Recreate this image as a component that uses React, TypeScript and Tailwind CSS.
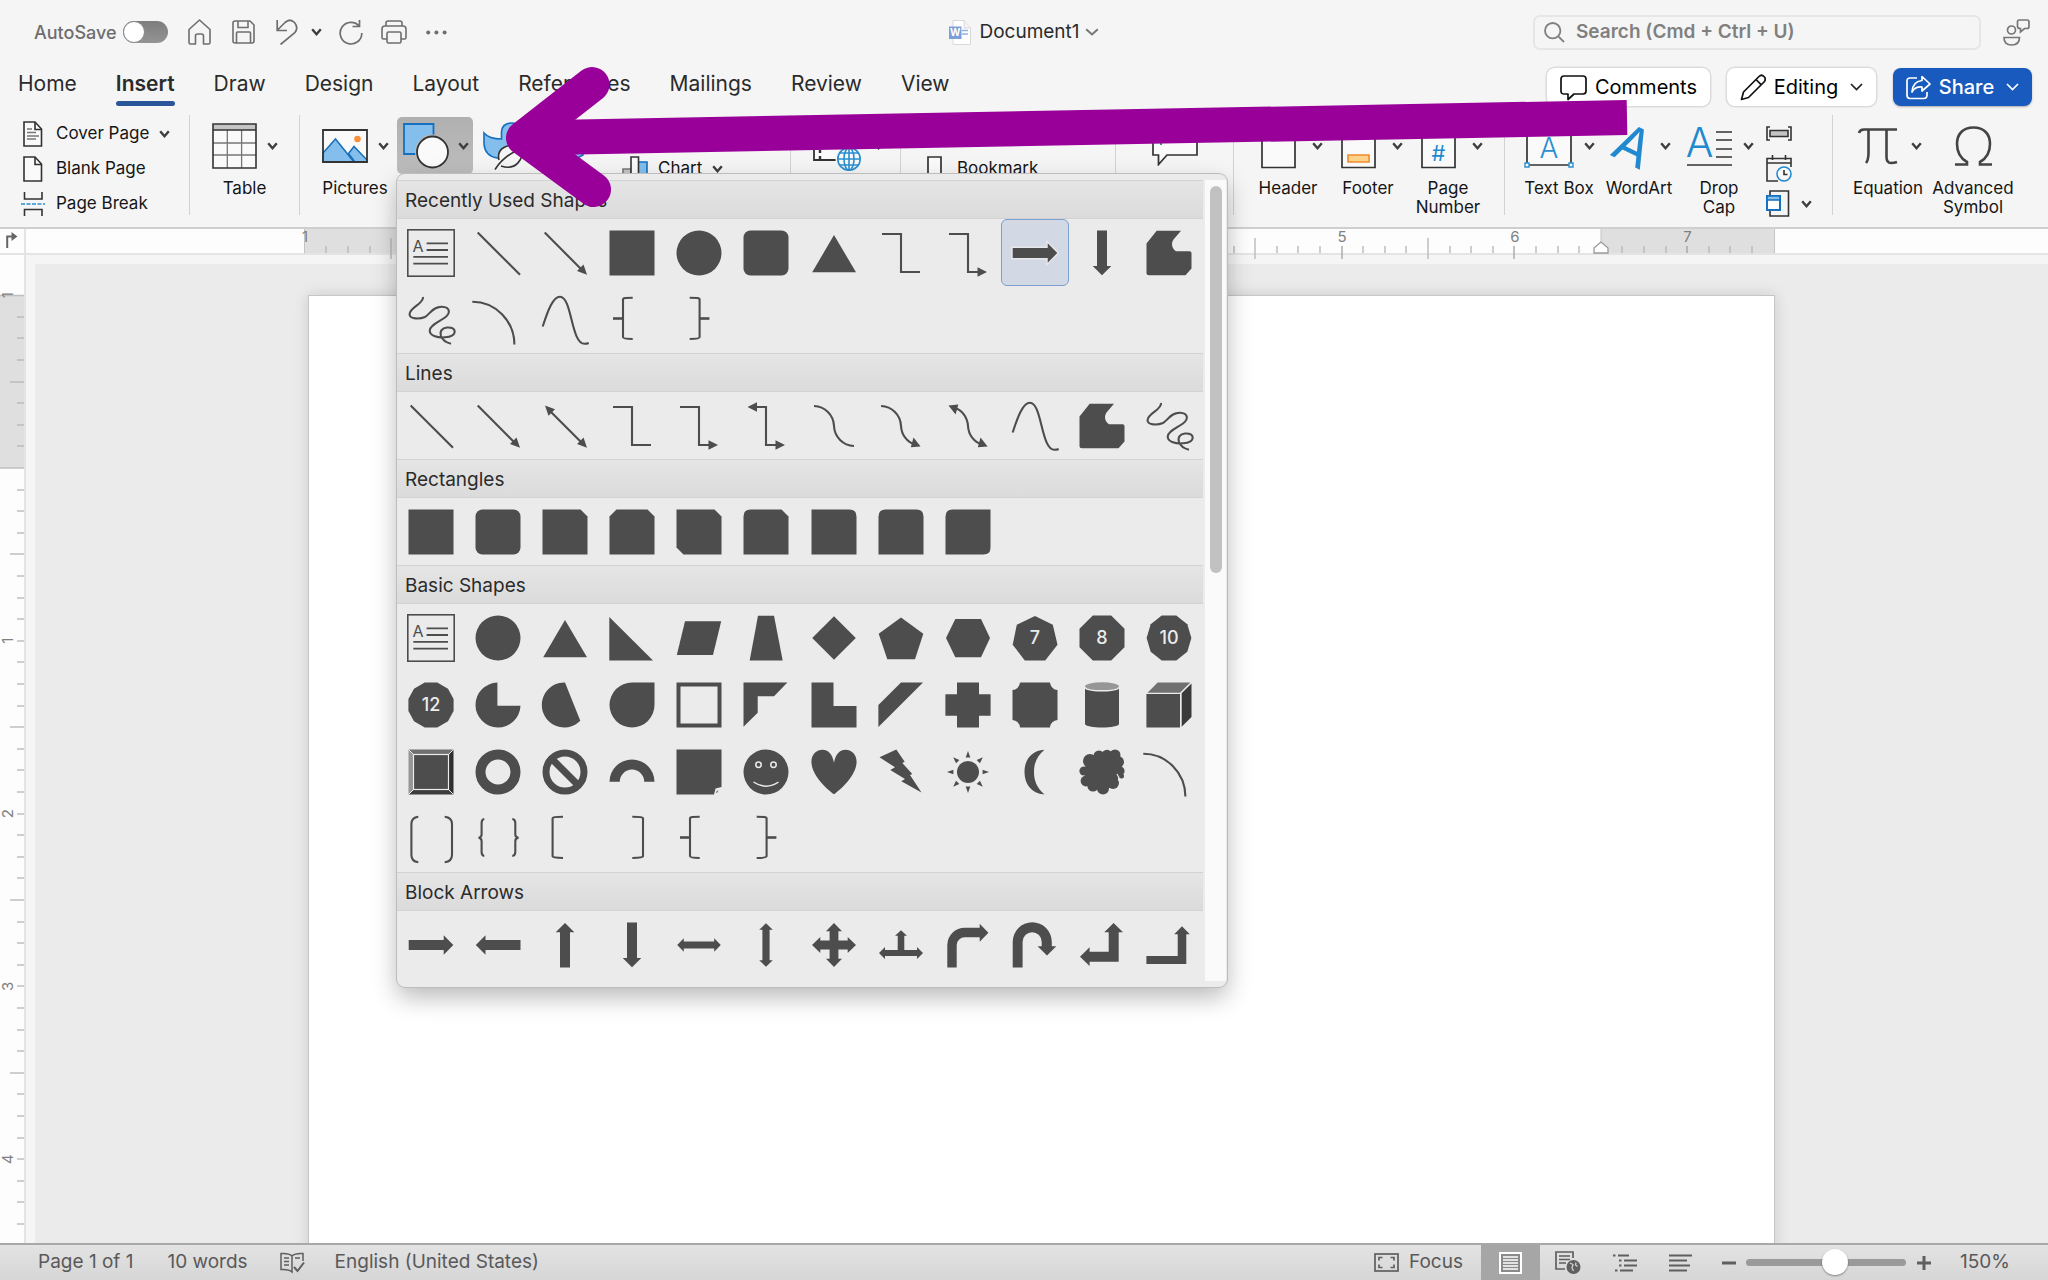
import React, { useState } from 'react';

const INK = '#4d4d4d';

/* ---------- shape gallery ---------- */

const rightHead = (x: number, y: number) => <path d={`M${x} ${y}l-9.5-4.7v9.4z`} fill={INK} />;
const leftHead = (x: number, y: number) => <path d={`M${x} ${y}l9.5-4.7v9.4z`} fill={INK} />;

const stroke = (d: string, w = 2.1) => <path d={d} fill="none" stroke={INK} strokeWidth={w} />;
const fill = (d: string) => <path d={d} fill={INK} />;
const digits = (d: string, label: string) => (
  <>
    {fill(d)}
    <text x="24" y="30.3" textAnchor="middle" fontSize="18" fontWeight="500" fill="#ececec" fontFamily="Inter, sans-serif">{label}</text>
  </>
);

const scribble = stroke(
  'M16 1C17 8 2.5 11 2.5 18.5C3 23 12 23.5 18 21C23 18 26 10.5 35 10.7C43 11 44 17 38 21.5C32 26 23 29 22.7 34.7C23 40 31 42 38 41.3C44 41 47.7 39 47.7 35.5C47.5 32 44 31.3 40 31.5C35 32 32.5 35 34 40C35.5 44.5 39 46.5 44 47.7'
);
const rightArrow = 'M1.7 19H36.7V14.3L46.3 24L36.7 33.7V29H1.7Z';
const downArrow = 'M19 1.5H29V37H33.3L24 46.3L14.7 37H19Z';

const SHAPES: Record<string, React.ReactNode> = {
  'Text Box': (
    <>
      <rect x="0.8" y="0.8" width="46.4" height="46.4" fill="none" stroke={INK} strokeWidth="1.6" />
      <text x="5.5" y="23" fontSize="16" fill={INK} fontFamily="Inter, sans-serif">A</text>
      {stroke('M19.6 14.4H41M19.6 21H41M6.3 27.8H41M6.3 34.7H41', 1.8)}
    </>
  ),
  Line: stroke('M3.7 3.5L46 45.8'),
  'Line Arrow': (
    <>
      {stroke('M3.7 3.5L40 40')}
      {fill('M46 45.8L42.5 35.5L36 42Z')}
    </>
  ),
  'Line Double Arrow': (
    <>
      {stroke('M8 8L40 40')}
      {fill('M46 45.8L42.5 35.5L36 42ZM4 3.5L7.5 13.8L14 7.3Z')}
    </>
  ),
  Rectangle: fill('M1.5 1.5H46.5V46.5H1.5Z'),
  Oval: <circle cx="24" cy="24" r="22.5" fill={INK} />,
  'Rounded Rectangle': <rect x="1.5" y="1.5" width="45" height="45" rx="7" fill={INK} />,
  Triangle: fill('M24 6L46 43.3H2.2Z'),
  'Elbow Connector': stroke('M5 5H24V43H43'),
  'Elbow Arrow Connector': (
    <>
      {stroke('M5 5H24V43H36')}
      {rightHead(43, 43)}
    </>
  ),
  'Elbow Double-Arrow Connector': (
    <>
      {stroke('M12 5H24V43H36')}
      {rightHead(43, 43)}
      {leftHead(5.5, 5)}
    </>
  ),
  'Right Arrow': fill(rightArrow),
  'Down Arrow': fill(downArrow),
  Freeform: fill('M11.7 1.7H36L28.5 10.5C25.5 15 27.5 20 31 22.3H44.5Q46.5 22.3 46.5 24V39.5L40.5 46.3H4Q1.5 46.3 1.5 43.8V14.5Z'),
  Scribble: scribble,
  Arc: stroke('M-1.7 5.7A42 43 0 0 1 40.4 48.5'),
  Curve: stroke('M1.7 30.5C7 14 12 0.7 19 0.7C31 0.7 30 47.8 43.5 47.8Q46 47.8 47.7 47'),
  'Left Brace': (
    <>
      {stroke('M24.7 1.7Q15 1.7 15 3.2V41.3Q15 42.8 24.7 43')}
      {stroke('M5 22.5H15', 2.6)}
    </>
  ),
  'Right Brace': (
    <>
      {stroke('M14.7 1.7Q24.6 1.7 24.6 3.2V41.3Q24.6 42.8 14.7 43')}
      {stroke('M24.6 22.5H34.4', 2.6)}
    </>
  ),
  'Curved Connector': stroke('M4 4C15 4.5 23.5 13 24 24C24.5 35 33 43.5 44 44'),
  'Curved Arrow Connector': (
    <>
      {stroke('M4 4C15 4.5 23.5 13 24 24C24.5 33 30 40 38 42.5')}
      {fill('M43.6 44.5L36.5 35.5L33.8 45.3Z')}
    </>
  ),
  'Curved Double-Arrow Connector': (
    <>
      {stroke('M10 5.5C18 8 23.5 15 24 24C24.5 33 30 40 38 42.5')}
      {fill('M43.6 44.5L36.5 35.5L33.8 45.3ZM4.5 3.5L14.3 2.6L11.6 12.4Z')}
    </>
  ),
  'Snip Single Corner': fill('M1.5 1.5H39.5L46.5 8.5V46.5H1.5Z'),
  'Snip Same Side': fill('M8.5 1.5H39.5L46.5 8.5V46.5H1.5V8.5Z'),
  'Snip Diagonal': fill('M1.5 1.5H39.5L46.5 8.5V46.5H8.5L1.5 39.5Z'),
  'Snip and Round': fill('M8.5 1.5H39.5L46.5 8.5V46.5H1.5V8.5Q1.5 1.5 8.5 1.5Z'),
  'Round Single Corner': fill('M1.5 1.5H39.5Q46.5 1.5 46.5 8.5V46.5H1.5Z'),
  'Round Same Side': fill('M8.5 1.5H39.5Q46.5 1.5 46.5 8.5V46.5H1.5V8.5Q1.5 1.5 8.5 1.5Z'),
  'Round Diagonal': fill('M8.5 1.5H46.5V39.5Q46.5 46.5 39.5 46.5H1.5V8.5Q1.5 1.5 8.5 1.5Z'),
  'Right Triangle': fill('M1.3 3L45 46.4H1.3Z'),
  Parallelogram: fill('M10 7.3H46.2L38 41H1.8Z'),
  Trapezoid: fill('M16 1.7H32L40.7 46.4H7.7Z'),
  Diamond: fill('M24 2.2L45.8 24L24 45.8L2.2 24Z'),
  Pentagon: fill('M24 3.5L46.3 19.7L38 45.2H10.3L1.7 19.7Z'),
  Hexagon: fill('M2 24L11.3 5H37L46 24L37 43.3H11.3Z'),
  Heptagon: digits('M24 2L41.8 10.7L46.5 30.7L34.2 46.4H13.8L1.7 30.7L5.8 10.7Z', '7'),
  Octagon: digits('M14.8 1.5H33.2L46.5 14.8V33.2L33.2 46.5H14.8L1.5 33.2V14.8Z', '8'),
  Decagon: digits('M16.7 1.6H31.3L42.3 10.3L46.4 24L42.3 37.7L31.3 46.4H16.7L5.7 37.7L1.6 24L5.7 10.3Z', '10'),
  Dodecagon: digits('M17.7 1.4H30.3L41 7.7L46.6 18V30L41 40.3L30.3 46.6H17.7L7 40.3L1.4 30V18L7 7.7Z', '12'),
  Pie: fill('M23.4 1.5A22.5 22.5 0 1 0 46.5 24.8H23.4Z'),
  Chord: fill('M24 1.5A22.5 22.5 0 1 0 39.3 39.8Z'),
  Teardrop: fill('M24 1.5H46.5V24A22.5 22.5 0 1 1 24 1.5Z'),
  Frame: <rect x="3.5" y="3.5" width="41" height="41" fill="none" stroke={INK} strokeWidth="4" />,
  'Half Frame': fill('M1.5 1.4H45.4L32 15.3H15.7V31.7L1.5 45.8Z'),
  'L-Shape': fill('M1.5 1.4H23.5V25H46.5V46.5H1.5Z'),
  'Diagonal Stripe': fill('M24 1.4H46L1.4 46V24Z'),
  Cross: fill('M13 1.4H35V13.3H46.6V34.7H35V46.6H13V34.7H1.4V13.3H13Z'),
  Plaque: fill('M9 1.5H39A8 8 0 0 0 46.5 9V39A8 8 0 0 0 39 46.5H9A8 8 0 0 0 1.5 39V9A8 8 0 0 0 9 1.5Z'),
  Can: (
    <>
      {fill('M7 6V43C7 47.6 41 47.6 41 43V6Z')}
      <ellipse cx="24" cy="5.4" rx="17" ry="4.2" fill="#969696" />
      <path d="M7 6C7 11 41 11 41 6" fill="none" stroke="#ececec" strokeWidth="1.4" />
    </>
  ),
  Cube: (
    <>
      {fill('M1.4 13H35V46.5H1.4Z')}
      <path d="M12.7 1.4H45.3L35 11.7H2.5Z" fill="#707070" />
      <path d="M36.7 12.3L46.5 2.5V36L36.7 45.8Z" fill="#3a3a3a" />
    </>
  ),
  Bevel: (
    <>
      <path d="M1.5 1.5L7 7V41L1.5 46.5Z" fill="#969696" />
      <path d="M1.5 1.5H46.5L41 7H7Z" fill="#707070" />
      <path d="M46.5 1.5V46.5L41 41V7Z" fill="#2f2f2f" />
      <path d="M1.5 46.5H46.5L41 41H7Z" fill="#3d3d3d" />
      <path d="M1.5 1.5L7 7M46.5 1.5L41 7M46.5 46.5L41 41M1.5 46.5L7 41" stroke="#ececec" strokeWidth="1" />
      <rect x="6.5" y="6.5" width="35" height="35" fill={INK} stroke="#ececec" strokeWidth="1.2" />
    </>
  ),
  Donut: <circle cx="24" cy="24" r="17.5" fill="none" stroke={INK} strokeWidth="10" />,
  'No Symbol': (
    <>
      <circle cx="24" cy="24" r="19" fill="none" stroke={INK} strokeWidth="7" />
      {stroke('M12 12L36 36', 7)}
    </>
  ),
  'Block Arc': fill('M1.5 33.8A22.5 22.3 0 0 1 46.5 33.8H36.3A12.3 12.2 0 0 0 11.7 33.8Z'),
  'Folded Corner': (
    <>
      {fill('M1.5 1.5H46.5V39L40.5 40.5L39 46.5H1.5Z')}
      {fill('M41 44L43.5 42L42 45Z')}
    </>
  ),
  'Smiley Face': (
    <>
      <circle cx="24" cy="24" r="22.5" fill={INK} />
      <g fill="none" stroke="#ececec" strokeWidth="1.5">
        <circle cx="16.5" cy="16.7" r="2.7" />
        <circle cx="31.5" cy="16.7" r="2.7" />
        <path d="M11.5 34Q24 42.5 36.5 34" />
      </g>
    </>
  ),
  Heart: fill('M24 46.3C16 40.5 1.4 27 1.4 13.5C1.4 6 7 1.7 12.5 1.7C18 1.7 22.5 6 24 14.7C25.5 6 30 1.7 35.5 1.7C41 1.7 46.6 6 46.6 13.5C46.6 27 32 40.5 24 46.3Z'),
  'Lightning Bolt': fill('M19.3 1.5L27.7 13.7L25.3 15L35.3 26L33 27L44.5 44.5L24.3 33.3L28 31L13.3 22L18 19.3L2.5 9.3Z'),
  Sun: (
    <>
      <circle cx="24" cy="24" r="11" fill={INK} />
      {[0, 45, 90, 135, 180, 225, 270, 315].map((a) => (
        <path key={a} d="M24 3L26.3 9.4H21.7Z" fill={INK} transform={`rotate(${a} 24 24)`} />
      ))}
    </>
  ),
  Moon: fill('M33.5 1.7C20 2.5 13.5 12 13.5 24C13.5 36 20 45.5 33.5 46.4C26 40 23 33 23 24C23 15 26 8 33.5 1.7Z'),
  Cloud: (
    <>
      <g fill={INK}>
        <circle cx="12" cy="13" r="7" />
        <circle cx="21" cy="8" r="5.5" />
        <circle cx="29" cy="7" r="5.3" />
        <circle cx="37" cy="7" r="5.5" />
        <circle cx="40" cy="14" r="6" />
        <circle cx="42" cy="23" r="4.6" />
        <circle cx="6" cy="23" r="4.6" />
        <circle cx="8" cy="33" r="5.4" />
        <circle cx="15" cy="38" r="5.6" />
        <circle cx="25" cy="40.5" r="6" />
        <circle cx="35" cy="35" r="6" />
        <circle cx="43.5" cy="28" r="2.5" />
        <circle cx="24" cy="24" r="17.5" />
      </g>
      <path d="M39 26Q41.5 29.5 41 33" fill="none" stroke="#ececec" strokeWidth="1.2" />
    </>
  ),
  'Double Bracket': stroke('M11.3 1.7Q4.4 2.5 4.4 9V40Q4.4 46.5 11.3 47.3M37.7 1.7Q45 2.5 45 9V40Q45 46.5 37.7 47.3'),
  'Double Brace': stroke('M10.3 4Q7.6 4.3 7.6 8V19.5Q7.6 22.5 4.5 22.7Q7.6 23 7.6 26V37Q7.6 40.7 10.3 41M38.3 4Q41.3 4.3 41.3 8V19.5Q41.3 22.5 44.6 22.7Q41.3 23 41.3 26V37Q41.3 40.7 38.3 41'),
  'Left Bracket': stroke('M22 1.7Q11.6 1.7 11.6 3V41.5Q11.6 42.8 22 43'),
  'Right Bracket': stroke('M24.3 1.7Q35 1.7 35 3V41.5Q35 42.8 24.3 43'),
  'Left Arrow': fill('M46.5 19H11.5V14.3L1.8 24L11.5 33.7V29H46.5Z'),
  'Up Arrow': fill('M19 46.5H29V11.3H33.3L24 2L14.7 11.3H19Z'),
  'Left-Right Arrow': fill('M2.2 24L8.8 17.2V20.4H39.2V17.2L45.8 24L39.2 30.8V27.6H8.8V30.8Z'),
  'Up-Down Arrow': fill('M24 2.2L17.2 8.8H20.4V39.2H17.2L24 45.8L30.8 39.2H27.6V8.8H30.8Z'),
  'Quad Arrow': fill('M24 2L32 10.3H28.4V19.6H37.7V16L46 24L37.7 32V28.4H28.4V37.7H32L24 46L16 37.7H19.6V28.4H10.3V32L2 24L10.3 16V19.6H19.6V10.3H16Z'),
  'Left-Right-Up Arrow': fill('M24 9.3L30 14.8H27.3V29H40V26L46 32L40 38V35H8V38L2 32L8 26V29H20.7V14.8H18Z'),
  'Bent Arrow': fill('M3.3 46.5V24A17.5 17.4 0 0 1 20.8 6.7H35.7V2.8L44.4 11.7L35.7 20.8V16.3H20.8A8 8 0 0 0 12.7 24V46.5Z'),
  'U-Turn Arrow': fill('M1.7 46.5V21A19.5 19.7 0 0 1 40.8 21V25.2H45.3L36 34.4L26.6 25.2H30.7V21A9.5 9.7 0 0 0 11.6 21V46.5Z'),
  'Left-Up Arrow': fill('M35.6 2L45 11.3H40.7V40.7H11.6V45L2 35.7L11.6 26.3V30.7H30.7V11.3H26.3Z'),
  'Bent-Up Arrow': fill('M37 5.3L44.8 13.2H41.3V43H1.4V35H32.7V13.2H29.2Z'),
};

const SECTIONS = [
  {
    title: 'Recently Used Shapes',
    items: ['Text Box', 'Line', 'Line Arrow', 'Rectangle', 'Oval', 'Rounded Rectangle', 'Triangle', 'Elbow Connector', 'Elbow Arrow Connector', 'Right Arrow', 'Down Arrow', 'Freeform', 'Scribble', 'Arc', 'Curve', 'Left Brace', 'Right Brace'],
  },
  {
    title: 'Lines',
    items: ['Line', 'Line Arrow', 'Line Double Arrow', 'Elbow Connector', 'Elbow Arrow Connector', 'Elbow Double-Arrow Connector', 'Curved Connector', 'Curved Arrow Connector', 'Curved Double-Arrow Connector', 'Curve', 'Freeform', 'Scribble'],
  },
  {
    title: 'Rectangles',
    items: ['Rectangle', 'Rounded Rectangle', 'Snip Single Corner', 'Snip Same Side', 'Snip Diagonal', 'Snip and Round', 'Round Single Corner', 'Round Same Side', 'Round Diagonal'],
  },
  {
    title: 'Basic Shapes',
    items: [
      'Text Box', 'Oval', 'Triangle', 'Right Triangle', 'Parallelogram', 'Trapezoid', 'Diamond', 'Pentagon', 'Hexagon', 'Heptagon', 'Octagon', 'Decagon',
      'Dodecagon', 'Pie', 'Chord', 'Teardrop', 'Frame', 'Half Frame', 'L-Shape', 'Diagonal Stripe', 'Cross', 'Plaque', 'Can', 'Cube',
      'Bevel', 'Donut', 'No Symbol', 'Block Arc', 'Folded Corner', 'Smiley Face', 'Heart', 'Lightning Bolt', 'Sun', 'Moon', 'Cloud', 'Arc',
      'Double Bracket', 'Double Brace', 'Left Bracket', 'Right Bracket', 'Left Brace', 'Right Brace',
    ],
  },
  {
    title: 'Block Arrows',
    items: ['Right Arrow', 'Left Arrow', 'Up Arrow', 'Down Arrow', 'Left-Right Arrow', 'Up-Down Arrow', 'Quad Arrow', 'Left-Right-Up Arrow', 'Bent Arrow', 'U-Turn Arrow', 'Left-Up Arrow', 'Bent-Up Arrow'],
  },
];

function ShapeGallery() {
  const [selected, setSelected] = useState('Recently Used Shapes/Right Arrow');

  return (
    <div className="absolute left-0 top-full z-10 flex w-[830px] items-stretch rounded-[8px] bg-[#ebebeb] pt-[6px] pb-[6px] shadow-[0_0_0_1px_#bdbdbd,0_10px_24px_rgba(0,0,0,0.28)]">
      <div className="w-[806px] pb-[3px]">
        {SECTIONS.map((s) => (
          <section key={s.title}>
            <h3 className="h-[39px] border-y border-[#d2d2d2] bg-gradient-to-b from-[#e5e5e5] to-[#dbdbdb] pl-2 text-[19px] leading-[39px] text-[#2b2b2b]">{s.title}</h3>
            <div className="grid grid-cols-12">
              {s.items.map((name) => {
                const on = selected === `${s.title}/${name}`;
                return (
                  <button
                    key={name}
                    aria-label={name}
                    onClick={() => setSelected(`${s.title}/${name}`)}
                    className={
                      on
                        ? 'flex h-[67px] items-center justify-center rounded-[6px] border border-[#7a9fd0] bg-[#d2d9e4]'
                        : 'flex h-[67px] items-center justify-center'
                    }
                  >
                    <svg width="48" height="48" viewBox="0 0 48 48" overflow="visible">
                      {on && <path d={rightArrow} fill="none" stroke="#e6e8ea" strokeWidth="3" />}
                      {SHAPES[name]}
                    </svg>
                  </button>
                );
              })}
            </div>
          </section>
        ))}
      </div>
      <div className="ml-[2px] flex w-[21px] justify-center bg-[#fafafa] pt-[6px]">
        <div className="h-[387px] w-3 rounded-full bg-[#c1c1c1]" />
      </div>
    </div>
  );
}

/* ---------- ribbon pieces ---------- */

const Chevron = () => (
  <svg width="11" height="8" viewBox="0 0 11 8" className="shrink-0">
    <path d="M1.2 1.2L5.5 6.2L9.8 1.2" fill="none" stroke="#3d3d3d" strokeWidth="2.4" />
  </svg>
);

const Divider = () => <div className="h-[100px] w-px shrink-0 bg-[#d2d2d2]" />;

function BigButton({ label, icon, menu = true, className = 'w-20' }: { label: string; icon: React.ReactNode; menu?: boolean; className?: string }) {
  return (
    <button className={`flex shrink-0 flex-col items-center ${className}`}>
      <span className="flex h-[62px] items-center gap-[10px]">
        {icon}
        {menu && <Chevron />}
      </span>
      <span className="mt-[2px] block text-center text-[17px] leading-[19px] whitespace-pre text-[#161616]">{label}</span>
    </button>
  );
}

function RowButton({ label, icon, menu }: { label: string; icon: React.ReactNode; menu?: boolean }) {
  return (
    <button className="flex h-[35px] items-center text-[17px] whitespace-nowrap text-[#161616]">
      <span className="mr-[10px] flex w-[26px] justify-center">{icon}</span>
      {label}
      {menu && <span className="ml-[10px]"><Chevron /></span>}
    </button>
  );
}

const pageOutline = 'M1 1H12L18.5 8V25H1Z';
const CoverPageIcon = () => (
  <svg width="20" height="26" viewBox="0 0 20 26" fill="none" stroke="#333" strokeWidth="1.6">
    <path d={pageOutline} fill="#fafafa" />
    <path d="M12 1V8.5H18.5" />
    <path d="M4 8H9M4 11.5H13M4 15H16M4 18H13" stroke="#777" strokeWidth="1.3" />
  </svg>
);
const BlankPageIcon = () => (
  <svg width="20" height="26" viewBox="0 0 20 26" fill="none" stroke="#333" strokeWidth="1.6">
    <path d={pageOutline} fill="#fafafa" />
    <path d="M12 1V8.5H18.5" />
  </svg>
);
const PageBreakIcon = () => (
  <svg width="24" height="26" viewBox="0 0 24 26" fill="none" stroke="#333" strokeWidth="1.6">
    <path d="M3.5 1V8H21V1M3.5 25V18.5H21V25" />
    <path d="M0 13H24" stroke="#2a8fd0" strokeDasharray="4 1.5" />
  </svg>
);
const TableIcon = () => (
  <svg width="45" height="46" viewBox="0 0 45 46" fill="none">
    <path d="M1 1H44V45H1Z" fill="#fafafa" />
    <path d="M1 1H44V7H1Z" fill="#c4c4c4" />
    <path d="M15.3 7V45M29.6 7V45M1 20H44M1 32H44" stroke="#777" strokeWidth="1.3" />
    <path d="M1 1H44V45H1ZM1 7H44" stroke="#333" strokeWidth="1.6" />
  </svg>
);
const PicturesIcon = () => (
  <svg width="46" height="34" viewBox="0 0 46 34" fill="none">
    <path d="M1 1H45V33H1Z" fill="#fafafa" />
    <path d="M1 24L13.5 10L32 33H1Z" fill="#83beec" stroke="#1a6fb8" strokeWidth="1.5" />
    <path d="M26.5 24.5L32 17.5L45 31V33H33Z" fill="#83beec" stroke="#1a6fb8" strokeWidth="1.5" />
    <circle cx="35.5" cy="10" r="3.3" fill="#fa9138" />
    <path d="M1 1H45V33H1Z" stroke="#333" strokeWidth="1.8" />
  </svg>
);
const ShapesIcon = () => (
  <svg width="46" height="46" viewBox="0 0 46 46" fill="none">
    <path d="M1 1H30.5V31H1Z" fill="#83beec" stroke="#1570c0" strokeWidth="1.8" />
    <circle cx="29.5" cy="29" r="17.5" fill="#bababa" />
    <circle cx="29.5" cy="29" r="15.5" fill="#fafafa" stroke="#333" strokeWidth="1.8" />
  </svg>
);
const IconsIcon = () => (
  <svg width="46" height="48" viewBox="0 0 46 48" fill="none">
    <path d="M1 11Q6 17 18.5 17V10Q19 1 29 1Q38 1 38 12L28 36H14Q2 34 1 22Z" fill="#83beec" stroke="#1570c0" strokeWidth="1.6" />
    <path d="M16 38C13 26 24 22 40 22C41 38 33 49 18 44" fill="#f5f5f5" stroke="#333" strokeWidth="1.6" />
    <path d="M12 47.5Q20 35 33 29" stroke="#333" strokeWidth="1.6" />
  </svg>
);
const CubeIcon = () => (
  <svg width="30" height="34" viewBox="0 0 30 34" fill="none">
    <path d="M2 8L15 1L28 8V26L15 33L2 26Z" fill="#83beec" stroke="#1570c0" strokeWidth="1.6" />
  </svg>
);
const ChartIcon = () => (
  <svg width="26" height="26" viewBox="0 0 26 26" fill="none" strokeWidth="1.6">
    <path d="M1 13H9V25H1Z" fill="#c4c4c4" stroke="#777" />
    <path d="M16 6H25V25H16Z" fill="#83beec" stroke="#1570c0" />
    <path d="M9 1H16.5V25H9Z" fill="#fafafa" stroke="#333" />
  </svg>
);
const VideoIcon = () => (
  <svg width="50" height="50" viewBox="0 0 50 50" fill="none">
    <path d="M1 9H38V39H1Z" fill="#fafafa" stroke="#333" strokeWidth="1.8" />
    <path d="M7 11V38" stroke="#333" strokeWidth="2.4" strokeDasharray="3 3" />
    <circle cx="36" cy="38" r="13.5" fill="#f5f5f5" />
    <g stroke="#2a8fd0" strokeWidth="1.6">
      <circle cx="36" cy="38" r="11.2" fill="#fafafa" />
      <ellipse cx="36" cy="38" rx="5" ry="11.2" />
      <path d="M36 27V49M25 38H47M27 32H45M27 44H45" />
    </g>
  </svg>
);
const BookmarkIcon = () => (
  <svg width="15" height="26" viewBox="0 0 15 26" fill="none">
    <path d="M1 1H14V25L7.5 18L1 25Z" fill="#fafafa" stroke="#333" strokeWidth="1.7" />
  </svg>
);
const CommentIcon = () => (
  <svg width="46" height="40" viewBox="0 0 46 40" fill="none">
    <path d="M1 1H45V29H15L6.5 38.5V29H1Z" fill="#fafafa" stroke="#333" strokeWidth="1.7" />
    <path d="M9 12V19" stroke="#22a35a" strokeWidth="2" />
  </svg>
);
const PageIcon = ({ children }: { children?: React.ReactNode }) => (
  <svg width="49" height="46" viewBox="-8 0 49 46" fill="none">
    <path d="M1 1H34V44.5H1Z" fill="#fafafa" stroke="#333" strokeWidth="1.7" />
    {children}
  </svg>
);
const TextBoxIcon = () => (
  <svg width="50" height="44" viewBox="0 0 50 44" fill="none">
    <path d="M3 3H47V41H3Z" fill="#fafafa" stroke="#333" strokeWidth="1.7" />
    <text x="25" y="34" textAnchor="middle" fontSize="28" fill="#2a8fd0" fontFamily="Inter, sans-serif" fontWeight="300">A</text>
    <path d="M1 39H5V43H1ZM45 39H49V43H45Z" fill="#fff" stroke="#2a8fd0" strokeWidth="1.4" />
  </svg>
);
const WordArtIcon = () => (
  <svg width="42" height="46" viewBox="-2 0 42 46" fill="none" overflow="visible">
    <text x="22" y="40" textAnchor="middle" fontSize="52" fill="#2189cf" fontFamily="Inter, sans-serif" fontWeight="400" transform="rotate(26 20 24)">A</text>
  </svg>
);
const DropCapIcon = () => (
  <svg width="48" height="42" viewBox="-2 0 48 42" fill="none">
    <text x="12.5" y="32" textAnchor="middle" fontSize="41" fill="#2189cf" fontFamily="Inter, sans-serif" fontWeight="300">A</text>
    <path d="M29 7H45M29 15H45M29 24H45M29 32H45M0 40H45" stroke="#333" strokeWidth="1.7" />
  </svg>
);
const EquationIcon = () => (
  <svg width="46" height="38" viewBox="-3 0 46 38" fill="none" stroke="#444" strokeWidth="2.6">
    <path d="M1 6Q2 2.5 6 2.5H39M10.5 3V26Q10.5 33 8 36M28.5 3V30Q28.5 36 33 36Q36 36 39 35" />
  </svg>
);
const OmegaIcon = () => (
  <svg width="39" height="42" viewBox="0 0 39 42" fill="none" stroke="#444" strokeWidth="2.6">
    <path d="M1 39.5H13V37C6 33 3 27 3 19C3 9 9 2.5 19.5 2.5S36 9 36 19C36 27 33 33 26 37V39.5H38" />
  </svg>
);

/* ---------- rulers ---------- */

const INCH = 172.8;
const eighths = (from: number, to: number) => Array.from({ length: to - from + 1 }, (_, i) => from + i);

function HorizontalRuler() {
  return (
    <div className="flex h-6 bg-[#fdfdfd]">
      <div className="w-[26px] shrink-0 border-r-2 border-[#e4e4e4] pt-[3px] pl-[6px]">
        <svg width="12" height="17" viewBox="0 0 12 17">
          <path d="M1.2 16V4.5H7" fill="none" stroke="#666" strokeWidth="2" />
          <path d="M5.5 0L11.5 4.5L5.5 9Z" fill="#666" />
        </svg>
      </div>
      <div className="flex flex-1 justify-center pl-[9px]">
        <svg width="1467" height="30" viewBox="0 0 1467 30" overflow="visible" className="relative shrink-0">
          <path d="M-4 0H170V24H-4ZM1293 0H1466V24H1293Z" fill="#dfdfdf" />
          <path d="M-3.5 0V24M1293 0V24M1466.5 0V24" stroke="#c4c4c4" />
          {eighths(-7, 59).map((n) => {
            const x = Math.round(169.5 + (n * INCH) / 8);
            if (n % 8 === 0) return <path key={n} d={n > 52 ? `M${x} 17V24` : `M${x} 17V30`} stroke="#a0a0a0" strokeWidth="1.3" />;
            return <path key={n} d={n % 4 === 0 && n < 52 ? `M${x} 9V30` : `M${x} 17V24`} stroke="#b5b5b5" strokeWidth="1.3" />;
          })}
          {[1, 2, 3, 4, 5, 6, 7].map((n) => (
            <text key={n} x={170 + n * INCH} y="13" textAnchor="middle" fontSize="15" fill="#808080" fontFamily="Inter, sans-serif">{n}</text>
          ))}
          <text x="-3" y="13" textAnchor="middle" fontSize="15" fill="#808080" fontFamily="Inter, sans-serif">1</text>
          <path d="M1286 24V19L1293 13L1300 19V24Z" fill="#fff" stroke="#999" strokeWidth="1.3" />
        </svg>
      </div>
    </div>
  );
}

function VerticalRuler() {
  return (
    <div className="w-[26px] shrink-0 overflow-hidden border-r-2 border-[#e4e4e4] bg-[#fdfdfd]">
      <svg width="24" height="990" viewBox="0 0 24 990">
        <path d="M0 40H24V213H0Z" fill="#dfdfdf" />
        <path d="M0 40.5H24M0 213H24" stroke="#c0c0c0" strokeWidth="1.5" />
        {eighths(-7, 36).map((n) => {
          const y = Math.round(213 + (n * INCH) / 8);
          if (n === 0) return null;
          return <path key={n} d={n % 8 !== 0 && n % 4 === 0 ? `M10 ${y}H24` : `M17 ${y}H24`} stroke="#b5b5b5" strokeWidth="1.3" />;
        })}
        {[-1, 1, 2, 3, 4].map((n) => (
          <text key={n} transform={`translate(13 ${213 + n * INCH}) rotate(-90)`} textAnchor="middle" fontSize="15" fill="#808080" fontFamily="Inter, sans-serif">{Math.abs(n)}</text>
        ))}
      </svg>
    </div>
  );
}

/* ---------- app ---------- */

function TitleBar() {
  return (
    <div className="flex h-[52px] items-center px-[18px] pt-3">
      <div className="flex flex-1 items-center text-[#6e6e6e]">
        <label htmlFor="autosave" className="ml-4 w-[89px] text-[18px] font-medium">AutoSave</label>
        <input
          id="autosave"
          type="checkbox"
          className="h-[22px] w-[45px] appearance-none rounded-full bg-[#858585] bg-gradient-to-b from-[#7d7d7d] to-[#949494] before:block before:size-[22px] before:rounded-full before:border before:border-[#8a8a8a] before:bg-white before:content-['']"
        />
        <div className="ml-5 flex items-center">
          <button aria-label="Home" className="mr-[21px]">
            <svg width="23" height="26" viewBox="0 0 23 26" fill="none" stroke="#6e6e6e" strokeWidth="1.6" strokeLinejoin="round">
              <path d="M1 10.5L11.5 1L22 10.5V23.5Q22 25 20.5 25H15.5V17Q15.5 15 13.5 15H9.5Q7.5 15 7.5 17V25H2.5Q1 25 1 23.5Z" />
            </svg>
          </button>
          <button aria-label="Save" className="mr-[21px]">
            <svg width="23" height="24" viewBox="0 0 23 24" fill="none" stroke="#6e6e6e" strokeWidth="1.6">
              <path d="M3 1H18L22 5V21Q22 23 20 23H3Q1 23 1 21V3Q1 1 3 1ZM6 1V7.5H16V1M4.5 23V13Q4.5 12 5.5 12H17.5Q18.5 12 18.5 13V23" />
            </svg>
          </button>
          <button aria-label="Undo" className="mr-[13px]">
            <svg width="22" height="26" viewBox="0 0 22 26" fill="none" stroke="#6e6e6e" strokeWidth="1.7">
              <path d="M1.2 1V11.5H11M1.5 11L9 3.5Q14-1 18.5 3.5Q23 9 18.5 14L4.5 25.5" />
            </svg>
          </button>
          <button aria-label="Undo history" className="mr-[17px]"><Chevron /></button>
          <button aria-label="Redo" className="mr-[18px]">
            <svg width="24" height="26" viewBox="0 0 24 26" fill="none" stroke="#6e6e6e" strokeWidth="1.7">
              <path d="M20.5 1V7.5H13.5M20.5 7.5A10.8 10.8 0 1 0 22.8 14" />
            </svg>
          </button>
          <button aria-label="Print" className="mr-[19px]">
            <svg width="26" height="24" viewBox="0 0 26 24" fill="none" stroke="#6e6e6e" strokeWidth="1.6">
              <path d="M5 6V3Q5 1 7 1H19Q21 1 21 3V6M6 19H2.5Q1 19 1 17.5V9Q1 6 4 6H22Q25 6 25 9V17.5Q25 19 23.5 19H20" />
              <rect x="6" y="12" width="14" height="11" rx="1.5" />
            </svg>
          </button>
          <button aria-label="More">
            <svg width="21" height="5" viewBox="0 0 21 5" fill="#6e6e6e">
              <circle cx="2.2" cy="2.5" r="2" />
              <circle cx="10.4" cy="2.5" r="2" />
              <circle cx="18.6" cy="2.5" r="2" />
            </svg>
          </button>
        </div>
      </div>

      <button className="flex items-center text-[19px] text-[#2b2b2b]">
        <svg width="22" height="25" viewBox="0 0 22 25" className="mr-[8px]">
          <path d="M4 0.5H15L21.5 8V24.5H4Z" fill="#fff" stroke="#d8d8d8" />
          <path d="M15 0.5V8H21.5" fill="#f2f2f2" stroke="#d8d8d8" />
          <path d="M13 10.5H19M13 14H19" stroke="#8db4e8" strokeWidth="1.5" />
          <rect x="0" y="6.5" width="12.5" height="12.5" fill="#7c9fd8" />
          <text x="6.2" y="16.3" textAnchor="middle" fontSize="10" fontWeight="700" fill="#fff" fontFamily="Inter, sans-serif">W</text>
        </svg>
        Document1
        <svg width="14" height="8" viewBox="0 0 14 8" className="ml-[5px]">
          <path d="M1.2 1.2L7 6.5L12.8 1.2" fill="none" stroke="#777" strokeWidth="2" />
        </svg>
      </button>

      <div className="flex flex-1 items-center justify-end">
        <div className="flex h-[35px] w-[448px] items-center rounded-[7px] border-2 border-[#e6e6e6] pl-[9px]">
          <svg width="21" height="21" viewBox="0 0 21 21" fill="none" stroke="#808080" strokeWidth="1.8">
            <circle cx="8.7" cy="8.7" r="7.7" />
            <path d="M14.3 14.3L20 20" />
          </svg>
          <input aria-label="Search" placeholder="Search (Cmd + Ctrl + U)" className="ml-[11px] flex-1 bg-transparent text-[19px] font-semibold outline-none placeholder:text-[#808080]" />
        </div>
        <button aria-label="Presence" className="ml-[22px]">
          <svg width="27" height="27" viewBox="0 0 27 27" fill="none" stroke="#777" strokeWidth="1.7">
            <circle cx="8.5" cy="11" r="4" />
            <path d="M1 18.5H16.5Q16.5 26 8.7 26T1 18.5Z" />
            <path d="M16 1H24Q26 1 26 3V7.5Q26 9.5 24 9.5H21.5L17.5 13V9.5Q14.5 9.5 14.5 7.5V3Q14.5 1 16 1Z" />
          </svg>
        </button>
      </div>
    </div>
  );
}

const TABS = ['Home', 'Insert', 'Draw', 'Design', 'Layout', 'References', 'Mailings', 'Review', 'View'];

function TabBar() {
  const [active, setActive] = useState('Insert');
  return (
    <div className="flex h-[63px] items-start justify-between pr-4 pl-[18px]">
      <nav className="flex gap-[39px] pt-5">
        {TABS.map((t) => (
          <button key={t} onClick={() => setActive(t)} className="flex flex-col text-[21px] leading-6 text-[#2b2b2b]">
            <span className={t === active ? 'font-semibold' : ''}>{t}</span>
            {t === active && <span className="mt-[5px] h-[5px] rounded-full bg-[#2b579a]" />}
          </button>
        ))}
      </nav>
      <div className="flex items-center gap-[17px] pt-4 text-[20px]">
        <button className="flex h-[38px] w-[163px] items-center justify-center gap-2 rounded-[8px] bg-white shadow-[0_0_0_1.5px_#dcdcdc]">
          <svg width="27" height="27" viewBox="0 0 27 27" fill="none" stroke="#111" strokeWidth="1.7" strokeLinejoin="round">
            <path d="M4 2H23Q26 2 26 5V17Q26 20 23 20H14L8 25.5V20H4Q1 20 1 17V5Q1 2 4 2Z" />
          </svg>
          Comments
        </button>
        <button className="flex h-[38px] w-[149px] items-center justify-center gap-2 rounded-[8px] bg-white shadow-[0_0_0_1.5px_#dcdcdc]">
          <svg width="26" height="27" viewBox="0 0 26 27" fill="none" stroke="#111" strokeWidth="1.7" strokeLinejoin="round">
            <path d="M1.5 25.5L3.5 18L19 2.5Q21.5 0 24 2.5T24 8L8.5 23.5ZM16 5.5L21.3 10.8" />
          </svg>
          Editing
          <svg width="13" height="8" viewBox="0 0 13 8" className="ml-1"><path d="M1 1L6.5 6.5L12 1" fill="none" stroke="#222" strokeWidth="1.7" /></svg>
        </button>
        <button className="flex h-[38px] w-[139px] items-center justify-center gap-2 rounded-[8px] bg-[#185abd] font-medium text-white shadow-[0_1px_2px_rgba(0,0,0,0.3)]">
          <svg width="25" height="25" viewBox="0 0 25 25" fill="none" stroke="#fff" strokeWidth="1.7" strokeLinejoin="round">
            <path d="M11 3H4Q1 3 1 6V20Q1 23.5 4 23.5H17.5Q21 23.5 21 20V17" />
            <path d="M16 1.5L24 9L16 16V12Q9 11.5 6 17Q6.5 6.5 16 5.5Z" />
          </svg>
          Share
          <svg width="13" height="8" viewBox="0 0 13 8" className="ml-1"><path d="M1 1L6.5 6.5L12 1" fill="none" stroke="#fff" strokeWidth="1.7" /></svg>
        </button>
      </div>
    </div>
  );
}

function Ribbon() {
  return (
    <div className="flex h-[112px] items-start">
      <div className="w-[189px] shrink-0 pt-px pl-5">
        <RowButton label="Cover Page" icon={<CoverPageIcon />} menu />
        <RowButton label="Blank Page" icon={<BlankPageIcon />} />
        <RowButton label="Page Break" icon={<PageBreakIcon />} />
      </div>
      <Divider />
      <BigButton label="Table" icon={<TableIcon />} className="w-[109px]" />
      <Divider />

      <div className="flex w-[490px] shrink-0">
        <BigButton label="Pictures" icon={<PicturesIcon />} className="ml-[13px] w-[84px]" />
        <div className="relative h-[59px] w-[76px] shrink-0 pt-[2px]">
          <button aria-label="Shapes" className="flex h-[57px] w-full items-center gap-[9px] rounded-[5px] bg-gradient-to-b from-[#b0b0b0] to-[#bdbdbd] pl-[6px]">
            <ShapesIcon />
            <Chevron />
          </button>
          <ShapeGallery />
        </div>
        <BigButton label="Icons" icon={<IconsIcon />} menu={false} className="w-[66px]" />
        <BigButton label={'3D\nModels'} icon={<CubeIcon />} className="w-[83px]" />
        <div className="shrink-0 pt-px">
          <RowButton label="SmartArt" icon={<ChartIcon />} menu />
          <RowButton label="Chart" icon={<ChartIcon />} menu />
        </div>
      </div>
      <Divider />
      <BigButton label={'Online\nVideo'} icon={<VideoIcon />} className="w-[109px] pl-[6px]" />
      <Divider />
      <div className="w-[214px] shrink-0 pt-px pl-5">
        <RowButton label="Link" icon={<BookmarkIcon />} />
        <RowButton label="Bookmark" icon={<BookmarkIcon />} />
      </div>
      <Divider />
      <BigButton label="Comment" icon={<CommentIcon />} menu={false} className="w-[117px]" />
      <Divider />

      <div className="flex w-[270px] shrink-0 pl-[14px]">
        <BigButton label="Header" icon={<PageIcon />} />
        <BigButton label="Footer" icon={<PageIcon><path d="M7 32H28V39H7Z" fill="#fcd38a" stroke="#f08a2c" strokeWidth="1.6" /></PageIcon>} />
        <BigButton
          label={'Page\nNumber'}
          icon={
            <PageIcon>
              <text x="17.5" y="38" textAnchor="middle" fontSize="22" fill="#2189cf" fontFamily="Inter, sans-serif">#</text>
            </PageIcon>
          }
        />
      </div>
      <Divider />
      <div className="flex w-[327px] shrink-0 pl-[14px]">
        <BigButton label="Text Box" icon={<TextBoxIcon />} />
        <BigButton label="WordArt" icon={<WordArtIcon />} />
        <BigButton label={'Drop\nCap'} icon={<DropCapIcon />} />
        <div className="pt-px pl-[7px]">
          <button aria-label="Field" className="flex h-[35px] items-center">
            <svg width="26" height="15" viewBox="0 0 26 15" fill="none" stroke="#333" strokeWidth="1.6">
              <path d="M4 1H1V14H4M22 1H25V14H22" />
              <path d="M4 4.5H22V10.5H4Z" fill="#c4c4c4" />
            </svg>
          </button>
          <button aria-label="Date and time" className="flex h-[35px] items-center">
            <svg width="26" height="27" viewBox="0 0 26 27" fill="none" stroke="#333" strokeWidth="1.6">
              <path d="M12 26H1V3.5H25V12M1 8H25M6.5 0V5M19.5 0V5" />
              <circle cx="18" cy="19" r="7" fill="#fafafa" stroke="#2189cf" />
              <path d="M18 15V19.5H21.5" />
            </svg>
          </button>
          <button aria-label="Object" className="flex h-[35px] items-center gap-[11px]">
            <svg width="24" height="27" viewBox="0 0 24 27" fill="none" strokeWidth="1.6">
              <path d="M4 5V1H22.5V26H4V21" stroke="#333" />
              <path d="M1 6H14V20H1Z" fill="#fff" stroke="#1570c0" strokeWidth="2" />
              <path d="M1 6H14V10H1Z" fill="#83beec" stroke="#1570c0" />
            </svg>
            <Chevron />
          </button>
        </div>
      </div>
      <Divider />
      <div className="flex shrink-0 pl-[13px]">
        <BigButton label="Equation" icon={<EquationIcon />} className="w-[84px]" />
        <BigButton label={'Advanced\nSymbol'} icon={<OmegaIcon />} menu={false} className="w-[86px]" />
      </div>
    </div>
  );
}

function StatusBar() {
  return (
    <footer className="flex h-[37px] shrink-0 items-center border-t-2 border-[#a8a8a8] bg-gradient-to-b from-[#e3e3e3] to-[#d6d6d6] px-[38px] text-[19px] text-[#595959]">
      <button>Page 1 of 1</button>
      <button className="ml-[34px]">10 words</button>
      <button aria-label="Proofing" className="ml-8">
        <svg width="25" height="22" viewBox="0 0 25 22" fill="none" stroke="#5f5f5f" strokeWidth="1.5">
          <path d="M12 4Q9 1 1 1.5V17.5Q9 17 12 20V4Q15 1 23 1.5V9M4 6H9M4 9.5H9M4 13H9M15 6H20" />
          <path d="M14 15L17.5 19L24 10.5" strokeWidth="2" />
        </svg>
      </button>
      <button className="ml-[30px]">English (United States)</button>
      <div className="flex-1" />
      <button className="flex items-center">
        <svg width="25" height="19" viewBox="0 0 25 19" fill="none" stroke="#5f5f5f" strokeWidth="1.7" className="mr-[10px]">
          <rect x="1" y="1" width="23" height="17" />
          <path d="M5 7.5V4.5H8.5M16.5 4.5H20V7.5M20 11.5V14.5H16.5M8.5 14.5H5V11.5" />
        </svg>
        Focus
      </button>
      <button aria-label="Print layout" className="ml-[18px] flex h-full w-[59px] items-center justify-center bg-[#a6a6a6]">
        <svg width="23" height="22" viewBox="0 0 23 22" fill="none" stroke="#fff" strokeWidth="1.6">
          <rect x="1" y="1" width="21" height="20" fill="#8a8a8a" strokeWidth="2" />
          <path d="M4 5H19M4 8H19M4 11H19M4 14H19M4 17H19" />
        </svg>
      </button>
      <button aria-label="Web layout" className="ml-[15px]">
        <svg width="26" height="24" viewBox="0 0 26 24" fill="none" stroke="#5f5f5f" strokeWidth="1.7">
          <path d="M10 18H1V1H18V7M4 5H15M4 8.5H15M4 12H11" />
          <circle cx="18.5" cy="16" r="7" fill="#5f5f5f" stroke="none" />
          <path d="M15 12L18 13.5L17 17L18.5 20M21 11.5L20.5 14L22.5 15.5" stroke="#d0d0d0" strokeWidth="1.3" />
        </svg>
      </button>
      <button aria-label="Outline" className="ml-8">
        <svg width="24" height="18" viewBox="0 0 24 18" stroke="#5f5f5f" strokeWidth="2">
          <path d="M0 1.5H2.5M5 1.5H16M6 6.5H8.5M11 6.5H24M6 11.5H8.5M11 11.5H24M2 16.5H4.5M7 16.5H20" />
        </svg>
      </button>
      <button aria-label="Draft" className="ml-8">
        <svg width="23" height="18" viewBox="0 0 23 18" stroke="#5f5f5f" strokeWidth="2">
          <path d="M0 1.5H23M0 6.5H18M0 11.5H21M0 16.5H18" />
        </svg>
      </button>
      <button aria-label="Zoom out" className="ml-[30px]">
        <svg width="14" height="14" viewBox="0 0 14 14"><path d="M0 7H14" stroke="#5f5f5f" strokeWidth="3" /></svg>
      </button>
      <input
        type="range"
        aria-label="Zoom"
        min="0"
        max="100"
        defaultValue="57"
        className="ml-[10px] h-7 w-[160px] appearance-none bg-transparent [&::-webkit-slider-runnable-track]:h-[7px] [&::-webkit-slider-runnable-track]:rounded-full [&::-webkit-slider-runnable-track]:bg-[#9a9a9a] [&::-webkit-slider-thumb]:-mt-[10px] [&::-webkit-slider-thumb]:size-[26px] [&::-webkit-slider-thumb]:appearance-none [&::-webkit-slider-thumb]:rounded-full [&::-webkit-slider-thumb]:bg-white [&::-webkit-slider-thumb]:shadow-[0_1px_2px_rgba(0,0,0,0.4)]"
      />
      <button aria-label="Zoom in" className="ml-[11px]">
        <svg width="14" height="14" viewBox="0 0 14 14"><path d="M0 7H14M7 0V14" stroke="#5f5f5f" strokeWidth="3" /></svg>
      </button>
      <button className="ml-[26px] w-[53px] text-right">150%</button>
    </footer>
  );
}

export default function App() {
  return (
    <div className="relative flex h-screen flex-col overflow-hidden bg-[#f5f5f5] font-['Inter','Noto_Sans',sans-serif]">
      <div className="relative z-10">
        <TitleBar />
        <TabBar />
        <Ribbon />
        {/* callout arrow pointing at the Shapes button */}
        <svg width="1640" height="220" viewBox="0 0 1640 220" fill="none" className="pointer-events-none absolute top-0 left-0 z-20">
          <path d="M524 138L1627 117.5" stroke="#990099" strokeWidth="35" />
          <path d="M592 84.5L523.5 138L593.5 189.5" stroke="#990099" strokeWidth="35" strokeLinecap="round" strokeLinejoin="round" />
        </svg>
      </div>

      <div className="border-t-2 border-[#cfcfcf]">
        <HorizontalRuler />
      </div>
      <div className="flex min-h-0 flex-1 border-t-2 border-[#e4e4e4]">
        <VerticalRuler />
        <main className="flex flex-1 justify-center overflow-hidden border-t-[9px] border-l-[9px] border-[#f5f5f5] bg-[#ebebeb] pt-[31px]">
          <div className="h-[1500px] w-[1467px] shrink-0 border border-[#c6c6c6] bg-white shadow-[0_0_14px_rgba(0,0,0,0.14)]" />
        </main>
      </div>
      <StatusBar />
    </div>
  );
}
